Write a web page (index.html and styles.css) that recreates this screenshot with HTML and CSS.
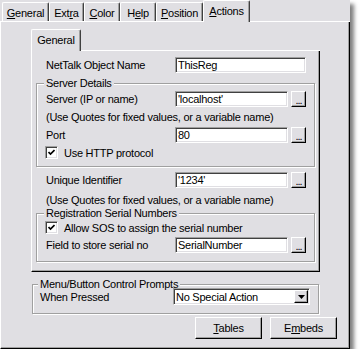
FILE: index.html
```html
<!DOCTYPE html>
<html lang="en">
<head>
  <meta charset="UTF-8">
  <title>Actions</title>
  <link rel="stylesheet" href="styles.css">
</head>
<body>

  <div class="window">
    <div class="tabs">
      <div class="tab tab-general"><u>G</u>eneral</div>
      <div class="tab tab-extra">Ext<u>r</u>a</div>
      <div class="tab tab-color"><u>C</u>olor</div>
      <div class="tab tab-help">H<u>e</u>lp</div>
      <div class="tab tab-position"><u>P</u>osition</div>
      <div class="tab tab-actions active"><u>A</u>ctions</div>
    </div>

    <div class="panel">
      <!-- inner sheet -->
      <div class="sheet">
        <div class="tabs inner-tabs">
          <div class="tab tab-inner active">General</div>
        </div>
        <div class="sheet-body">
          <div class="row row-name">
            <label>NetTalk Object Name</label>
            <input class="field wide" type="text" value="ThisReg">
          </div>

          <div class="group group-server">
            <div class="group-title">Server Details</div>
            <div class="row row-first">
              <label>Server (IP or name)</label>
              <input class="field" type="text" value="'localhost'">
              <button class="dots">...</button>
            </div>
            <div class="note">(Use Quotes for fixed values, or a variable name)</div>
            <div class="row row-port">
              <label>Port</label>
              <input class="field" type="text" value="80">
              <button class="dots">...</button>
            </div>
            <div class="check-row">
              <span class="check"><svg width="7" height="7" viewBox="0 0 7 7"><path d="M0.5 3 L2.5 5 L6.5 1" fill="none" stroke="#000" stroke-width="1.7"/></svg></span>
              <span>Use HTTP protocol</span>
            </div>
          </div>

          <div class="row row-unique">
            <label>Unique Identifier</label>
            <input class="field" type="text" value="'1234'">
            <button class="dots">...</button>
          </div>
          <div class="note note-unique">(Use Quotes for fixed values, or a variable name)</div>

          <div class="group group-serial">
            <div class="group-title">Registration Serial Numbers</div>
            <div class="check-row check-first">
              <span class="check"><svg width="7" height="7" viewBox="0 0 7 7"><path d="M0.5 3 L2.5 5 L6.5 1" fill="none" stroke="#000" stroke-width="1.7"/></svg></span>
              <span>Allow SOS to assign the serial number</span>
            </div>
            <div class="row row-port">
              <label>Field to store serial no</label>
              <input class="field" type="text" value="SerialNumber">
              <button class="dots">...</button>
            </div>
          </div>
        </div>
      </div>

      <div class="group group-menu">
        <div class="group-title">Menu/Button Control Prompts</div>
        <div class="row row-combo">
          <label>When Pressed</label>
          <div class="combo">
            <span class="combo-text">No Special Action</span>
            <span class="combo-btn"><svg width="7" height="4" viewBox="0 0 7 4"><path d="M0 0 H7 L3.5 4 Z" fill="#000"/></svg></span>
          </div>
        </div>
      </div>

      <div class="buttons">
        <button class="btn"><u>T</u>ables</button>
        <button class="btn">E<u>m</u>beds</button>
      </div>
    </div>
  </div>

</body>
</html>
```

FILE: styles.css
```css
body {
  margin: 0;
  background-color: #ffffff;
  font-family: "Liberation Sans", Arial, sans-serif;
  font-size: 11px;
  letter-spacing: -0.25px;
  color: #000;
}

.window {
  width: 350px;
  height: 349px;
  background-color: #e0dfe3;
  box-shadow: 4px 4px 4px rgba(0, 0, 0, 0.5);
  display: flex;
  flex-direction: column;
}

/* tab strips */
.tabs {
  display: flex;
  align-items: flex-end;
  height: 21px;
  padding-left: 2px;
  border-bottom: 1px solid #fff;
}

.tab {
  box-sizing: border-box;
  height: 19px;
  padding-top: 3px;
  line-height: 15px;
  text-align: center;
  border-top: 1px solid #fff;
  border-left: 1px solid #fff;
  border-right: 1px solid #404040;
  border-radius: 2px 2px 0 0;
  box-shadow: inset -1px 0 #a0a0a0;
  background-color: #e0dfe3;
}

.tab.active {
  height: 22px;
  margin-bottom: -1px;
  position: relative;
  z-index: 1;
}

.tab-general { width: 47px; }
.tab-extra { width: 35px; }
.tab-color { width: 36px; }
.tab-help { width: 36px; }
.tab-position { width: 47px; }
.tab-actions { width: 47px; }

.panel {
  flex: 1;
  border-left: 1px solid #fff;
  border-right: 1px solid #000;
  border-bottom: 1px solid #000;
  box-shadow: inset -1px -1px #a0a0a0;
  padding: 7px 0 0 30px;
  display: flex;
  flex-direction: column;
}

.sheet {
  width: 289px;
}

.inner-tabs {
  padding-left: 0;
}

.tab-inner {
  width: 50px;
}

.sheet-body {
  box-sizing: border-box;
  height: 221px;
  border-left: 1px solid #fff;
  border-right: 1px solid #000;
  border-bottom: 1px solid #000;
  box-shadow: inset -1px -1px #a0a0a0;
  padding: 0 4px;
  display: flex;
  flex-direction: column;
}

/* rows */
.row {
  display: flex;
  align-items: center;
  height: 16px;
}

.row label {
  width: 129px;
  flex: none;
}

.row-name {
  margin-top: 6px;
  padding-left: 10px;
}

.row-unique {
  margin-top: 5px;
  padding-left: 10px;
}

.row-first {
  margin-top: 5px;
}

.row-port {
  margin-top: 3px;
}

.note {
  height: 13px;
  line-height: 13px;
  margin-top: 4px;
  white-space: nowrap;
}

.note-unique {
  margin-top: 6px;
  padding-left: 10px;
}

.field {
  box-sizing: border-box;
  width: 113px;
  height: 16px;
  margin: 0;
  padding: 0 2px;
  border: 1px solid;
  border-color: #a0a0a0 #fff #fff #a0a0a0;
  box-shadow: inset 1px 1px #404040, inset -1px -1px #e0dfe3;
  background-color: #fff;
  font: inherit;
  letter-spacing: inherit;
  color: #000;
  outline: none;
}

.field.wide {
  width: 131px;
}

.dots {
  box-sizing: border-box;
  width: 15px;
  height: 16px;
  margin-left: 3px;
  padding: 0;
  border: 1px solid;
  border-color: #fff #000 #000 #fff;
  box-shadow: inset -1px -1px #a0a0a0;
  background-color: #e0dfe3;
  font: inherit;
  line-height: 16px;
  letter-spacing: -1px;
}

/* group boxes */
.group {
  display: flex;
  flex-direction: column;
  border: 1px solid #a0a0a0;
  box-shadow: inset 1px 1px #fff, 1px 1px #fff;
  padding: 0 0 7px 9px;
}

.group-server {
  margin-top: 10px;
}

.group-serial {
  margin-top: 6px;
  padding-bottom: 8px;
}

.group-title {
  align-self: flex-start;
  height: 13px;
  line-height: 13px;
  margin: -7px 0 -4px -2px;
  padding: 0 2px;
  background-color: #e0dfe3;
  white-space: nowrap;
}

.check-row {
  display: flex;
  align-items: center;
  height: 13px;
  margin-top: 3px;
  margin-left: -1px;
  gap: 6px;
}

.check-first {
  margin-top: 5px;
}

.check {
  box-sizing: border-box;
  width: 13px;
  height: 13px;
  border: 1px solid;
  border-color: #a0a0a0 #fff #fff #a0a0a0;
  box-shadow: inset 1px 1px #404040, inset -1px -1px #e0dfe3;
  background-color: #fff;
  display: flex;
  align-items: center;
  justify-content: center;
}

/* menu group */
.group-menu {
  width: 287px;
  box-sizing: border-box;
  margin: 12px 0 0 1px;
  padding: 0 0 8px 7px;
}

.row-combo {
  margin-top: 1px;
  height: 17px;
}

.row-combo label {
  width: 133px;
}

.combo {
  box-sizing: border-box;
  width: 137px;
  height: 17px;
  border: 1px solid;
  border-color: #a0a0a0 #fff #fff #a0a0a0;
  box-shadow: inset 1px 1px #404040, inset -1px -1px #e0dfe3;
  background-color: #fff;
  display: flex;
  align-items: center;
  padding: 1px 1px 1px 2px;
}

.combo-text {
  flex: 1;
}

.combo-btn {
  box-sizing: border-box;
  width: 14px;
  height: 13px;
  border: 1px solid;
  border-color: #fff #000 #000 #fff;
  box-shadow: inset -1px -1px #a0a0a0;
  background-color: #e0dfe3;
  display: flex;
  align-items: center;
  justify-content: center;
}

/* bottom buttons */
.buttons {
  display: flex;
  justify-content: flex-end;
  gap: 8px;
  margin: 3px 12px 0 0;
}

.btn {
  box-sizing: border-box;
  width: 67px;
  height: 22px;
  padding: 0;
  border: 1px solid;
  border-color: #fff #000 #000 #fff;
  box-shadow: inset -1px -1px #a0a0a0;
  background-color: #e0dfe3;
  font: inherit;
  letter-spacing: inherit;
  color: #000;
}
```
